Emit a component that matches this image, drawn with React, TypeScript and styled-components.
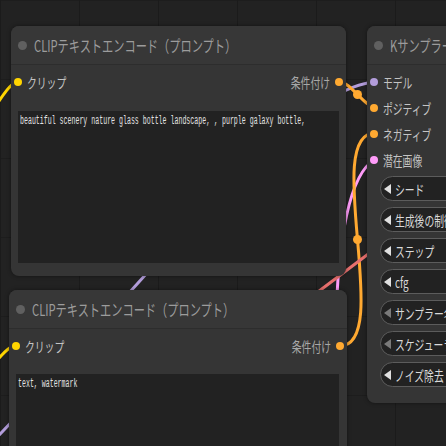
import * as React from 'react'
import styled, { createGlobalStyle } from 'styled-components'

const GlobalStyle = createGlobalStyle`
  html, body {
    margin: 0;
    padding: 0;
    overflow: hidden;
    background: #222;
  }
`;

const Canvas = styled.div`
  position: relative;
  width: 446px;
  height: 446px;
  overflow: hidden;
  background-color: #222;
  background-image:
    linear-gradient(to right, #1b1b1b 1px, transparent 1px),
    linear-gradient(to bottom, #1d1d1d 1px, transparent 1px);
  background-size: 79px 79px;
  font-family: "Noto Sans CJK JP", "Noto Sans", sans-serif;
`;

const Links = styled.svg`
  position: absolute;
  left: 0;
  top: 0;
`;

const Node = styled.div<{ $x: number; $y: number; $w: number; $h: number }>`
  position: absolute;
  left: ${p => p.$x}px;
  top: ${p => p.$y}px;
  width: ${p => p.$w}px;
  height: ${p => p.$h}px;
  background: #353535;
  border-radius: 8px;
  box-shadow: 0 0 4px rgba(0, 0, 0, 0.45);
  display: flex;
  flex-direction: column;
  overflow: hidden;
`;

const TitleBar = styled.div`
  flex: none;
  height: 39px;
  box-sizing: border-box;
  display: flex;
  align-items: center;
  gap: 7px;
  padding-left: 7px;
  background: #373737;
  border-bottom: 1px solid #2d2d2d;
`;

const TitleDot = styled.span`
  width: 9px;
  height: 9px;
  border-radius: 50%;
  background: #606060;
  flex: none;
`;

const Squeeze = styled.span<{ $sx?: number; $origin?: 'left' | 'right' }>`
  display: inline-block;
  white-space: nowrap;
  transform: scaleX(${p => p.$sx ?? 0.7});
  transform-origin: ${p => p.$origin ?? 'left'} center;
`;

const TitleText = styled.div`
  font-size: 16px;
  line-height: 1;
  color: #9c9c9c;
  white-space: nowrap;
`;

const Slots = styled.div`
  flex: none;
  padding-top: 4px;
`;

const SlotRow = styled.div`
  height: 26px;
  display: flex;
  align-items: center;
  justify-content: space-between;
  padding: 0 3px;
`;

const Slot = styled.div<{ $dim?: boolean }>`
  display: flex;
  align-items: center;
  gap: 5px;
  font-size: 14px;
  line-height: 1;
  color: ${p => (p.$dim ? '#a8a8a8' : '#c4c4c4')};
`;

const Dot = styled.span<{ $color: string }>`
  width: 8px;
  height: 8px;
  border-radius: 50%;
  background: ${p => p.$color};
  flex: none;
`;

const PromptBox = styled.div<{ $top: number; $right: number }>`
  flex: 1;
  margin: ${p => p.$top}px ${p => p.$right}px 13px 7px;
  background: #222;
  padding: 3px 2px;
  font-family: "Liberation Mono", "DejaVu Sans Mono", monospace;
  font-size: 12px;
  line-height: 14px;
  color: #e2e2e2;
  overflow: hidden;
`;

const Widgets = styled.div`
  display: flex;
  flex-direction: column;
  gap: 6px;
  padding: 3px 0 0 13px;
`;

const Pill = styled.div`
  width: 200px;
  height: 25px;
  box-sizing: border-box;
  border: 1px solid #5c5c5c;
  border-radius: 13px;
  background: #222;
  display: flex;
  align-items: center;
  gap: 4px;
  padding-left: 3px;
  font-size: 14px;
  line-height: 1;
  color: #dadada;
`;

const Arrow = styled.span<{ $dim?: boolean }>`
  width: 0;
  height: 0;
  border-top: 5px solid transparent;
  border-bottom: 5px solid transparent;
  border-right: 7px solid ${p => (p.$dim ? '#7a7a7a' : '#e0e0e0')};
  flex: none;
`;

const COLORS = {
  clip: '#FFD500',
  cond: '#FFA931',
  model: '#B39DDB',
  latent: '#FF9CF9',
  vae: '#E8706E',
};

type PromptNodeProps = { x: number; y: number; w: number; h: number; top: number; right: number; text: string };

const PromptNode = ({ x, y, w, h, top, right, text }: PromptNodeProps) => (
  <Node $x={x} $y={y} $w={w} $h={h}>
    <TitleBar>
      <TitleDot />
      <TitleText><Squeeze>CLIPテキストエンコード（プロンプト）</Squeeze></TitleText>
    </TitleBar>
    <Slots>
      <SlotRow>
        <Slot>
          <Dot $color={COLORS.clip} />
          <Squeeze>クリップ</Squeeze>
        </Slot>
        <Slot $dim>
          <Squeeze $origin="right">条件付け</Squeeze>
          <Dot $color={COLORS.cond} />
        </Slot>
      </SlotRow>
    </Slots>
    <PromptBox $top={top} $right={right}>
      <Squeeze $sx={0.55}>{text}</Squeeze>
    </PromptBox>
  </Node>
);

const samplerInputs = [
  { label: 'モデル', color: COLORS.model },
  { label: 'ポジティブ', color: COLORS.cond },
  { label: 'ネガティブ', color: COLORS.cond },
  { label: '潜在画像', color: COLORS.latent },
];

const samplerWidgets = [
  { label: 'シード' },
  { label: '生成後の制御' },
  { label: 'ステップ' },
  { label: 'cfg' },
  { label: 'サンプラー名', dim: true },
  { label: 'スケジューラー', dim: true },
  { label: 'ノイズ除去' },
];

// link curve between two slots, control points pushed out horizontally
const linkPath = (ax: number, ay: number, bx: number, by: number) => {
  const off = Math.hypot(bx - ax, by - ay) * 0.25;
  return `M ${ax} ${ay} C ${ax + off} ${ay}, ${bx - off} ${by}, ${bx} ${by}`;
};

export default function App() {
  return (
    <Canvas>
      <GlobalStyle />
      <Links width={446} height={446} viewBox="0 0 446 446">
        <g fill="none" strokeWidth={3} strokeLinecap="round">
          <path d="M -30 140 C -8 118, 4 86, 17 82" stroke={COLORS.clip} />
          <path d="M -25 385 C -6 366, 4 348, 16 345" stroke={COLORS.clip} />
          <path d="M -20 455 C 150 280, 290 88, 375 82" stroke={COLORS.model} />
          <path d="M 336 330 C 337 240, 350 172, 375 160" stroke={COLORS.latent} />
          <path d={linkPath(340, 82, 375, 107)} stroke={COLORS.cond} />
          <path d={linkPath(340, 346, 375, 133)} stroke={COLORS.cond} />
          <path d="M 420 215 L 290 313" stroke={COLORS.vae} />
        </g>
        <circle cx={357.5} cy={94.5} r={4.5} fill={COLORS.cond} />
        <circle cx={357.5} cy={239.5} r={4.5} fill={COLORS.cond} />
      </Links>

      <PromptNode
        x={11} y={26} w={335} h={250} top={16} right={7}
        text="beautiful scenery nature glass bottle landscape, , purple galaxy bottle,"
      />
      <PromptNode x={9} y={290} w={338} h={200} top={15} right={8} text="text, watermark" />

      <Node $x={367} $y={26} $w={220} $h={377}>
        <TitleBar>
          <TitleDot />
          <TitleText><Squeeze>Kサンプラー</Squeeze></TitleText>
        </TitleBar>
        <Slots>
          {samplerInputs.map(s => (
            <SlotRow key={s.label}>
              <Slot>
                <Dot $color={s.color} />
                <Squeeze>{s.label}</Squeeze>
              </Slot>
            </SlotRow>
          ))}
        </Slots>
        <Widgets>
          {samplerWidgets.map(w => (
            <Pill key={w.label}>
              <Arrow $dim={w.dim} />
              <Squeeze>{w.label}</Squeeze>
            </Pill>
          ))}
        </Widgets>
      </Node>
    </Canvas>
  );
}
